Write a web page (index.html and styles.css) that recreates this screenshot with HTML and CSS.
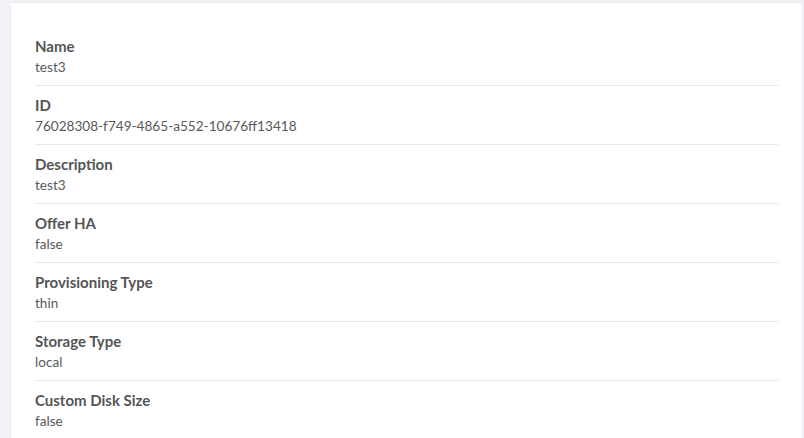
FILE: index.html
```html
<!DOCTYPE html>
<html>
<head>
<meta charset="utf-8">
<link rel="stylesheet" href="styles.css">
</head>
<body>
<div class="page">
  <div class="card">
    <dl class="details">
      <div class="row"><dt class="label">Name</dt><dd class="value">test3</dd></div>
      <div class="row"><dt class="label">ID</dt><dd class="value">76028308-f749-4865-a552-10676ff13418</dd></div>
      <div class="row"><dt class="label">Description</dt><dd class="value">test3</dd></div>
      <div class="row"><dt class="label">Offer HA</dt><dd class="value">false</dd></div>
      <div class="row"><dt class="label">Provisioning Type</dt><dd class="value">thin</dd></div>
      <div class="row"><dt class="label">Storage Type</dt><dd class="value">local</dd></div>
      <div class="row last"><dt class="label">Custom Disk Size</dt><dd class="value">false</dd></div>
    </dl>
  </div>
</div>
</body>
</html>
```
FILE: styles.css
```css
html, body {
  margin: 0;
  padding: 0;
  background: #f0f2f5;
  height: 100%;
  overflow: hidden;
}
.page {
  padding: 3px 2px 0 11px;
}
.card {
  background: #fff;
  padding: 24px 24px 0 24px;
  min-height: 420px;
  box-shadow: 0 0 1px rgba(0,0,0,0.12);
}
.details {
  margin: 0;
  font-family: Lato, "Liberation Sans", sans-serif;
  color: #595959;
}
.row {
  padding: 9px 0 7px;
  border-bottom: 1px solid #e8e8e8;
}
.row.last {
  border-bottom: none;
}
.label {
  margin: 0;
  font-size: 15px;
  font-weight: 700;
  line-height: 21px;
  color: #555;
}
.value {
  margin: 0;
  font-size: 13.6px;
  line-height: 21px;
  color: #595959;
}
```
